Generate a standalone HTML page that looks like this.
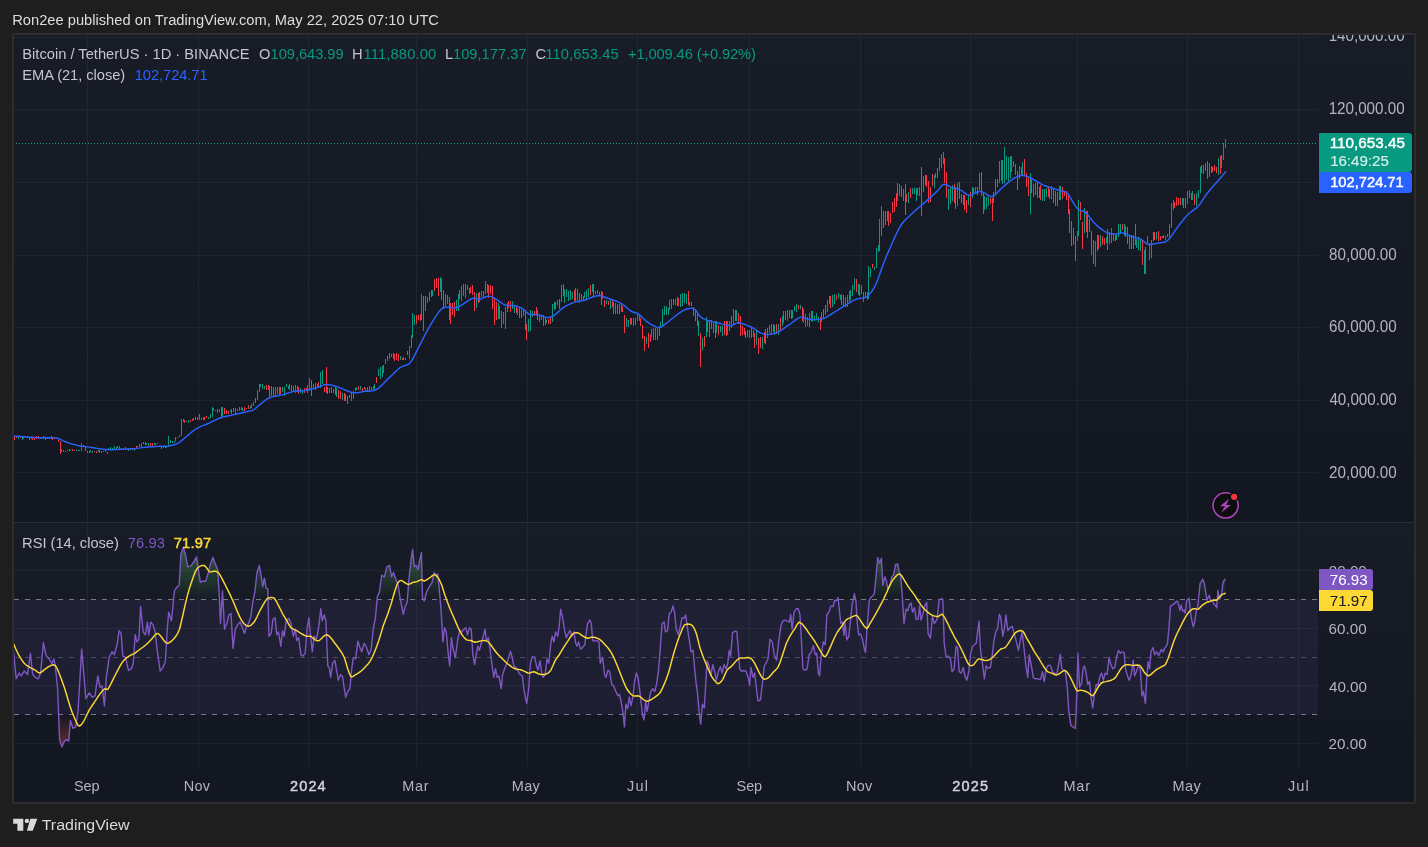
<!DOCTYPE html>
<html lang="en"><head><meta charset="utf-8"><title>BTCUSDT chart</title>
<style>
html,body{margin:0;padding:0;background:#1e1e1e;}
body{width:1428px;height:847px;position:relative;overflow:hidden;font-family:"Liberation Sans","DejaVu Sans",sans-serif;}
#chart{position:absolute;left:12px;top:33px;width:1400px;height:767px;border:2px solid #2d2d2d;border-radius:2px;background:#131722;}
.pane{position:absolute;left:0;width:1400px;background:linear-gradient(#181c27,#131722);}
.t{position:absolute;white-space:nowrap;line-height:1;color:#b2b5be;}
.hd{color:#dcdcdc;}
.lg{color:#c3c6ce;}
.gr{color:#089981;}
.ax{color:#b2b5be;}
.tm{color:#b2b5be;}
.yr{color:#d1d4dc;}
#txt{position:absolute;left:0;top:0;width:1428px;height:847px;will-change:transform;}
.pl{position:absolute;left:1319px;}
.pl .t{color:#fff;}
</style></head><body>
<div id="chart"><div class="pane" style="top:0;height:487px"></div><div class="pane" style="top:488px;height:244px"></div></div>
<svg width="1428" height="847" viewBox="0 0 1428 847" style="position:absolute;left:0;top:0">
<defs>
<linearGradient id="gob" gradientUnits="userSpaceOnUse" x1="0" y1="513" x2="0" y2="599.5"><stop offset="0" stop-color="#4caf50" stop-opacity="0.75"/><stop offset="1" stop-color="#4caf50" stop-opacity="0"/></linearGradient>
<linearGradient id="gos" gradientUnits="userSpaceOnUse" x1="0" y1="714.5" x2="0" y2="800"><stop offset="0" stop-color="#ff5252" stop-opacity="0"/><stop offset="1" stop-color="#ff5252" stop-opacity="0.9"/></linearGradient>
<clipPath id="cob"><rect x="14" y="523" width="1304" height="76.5"/></clipPath>
<clipPath id="cos"><rect x="14" y="714.5" width="1304" height="52.5"/></clipPath>
<clipPath id="cmain"><rect x="14" y="35" width="1304" height="487"/></clipPath>
<clipPath id="crsi"><rect x="14" y="523" width="1304" height="244"/></clipPath>
</defs>
<path fill="#f0f3fa" fill-opacity="0.055" shape-rendering="crispEdges" d="M87 35h1v732h-1zM198 35h1v732h-1zM308 35h1v732h-1zM416 35h1v732h-1zM527 35h1v732h-1zM637 35h1v732h-1zM749 35h1v732h-1zM860 35h1v732h-1zM970 35h1v732h-1zM1077 35h1v732h-1zM1187 35h1v732h-1zM1298 35h1v732h-1zM14 37h1304v1h-1304zM14 109h1304v1h-1304zM14 182h1304v1h-1304zM14 255h1304v1h-1304zM14 327h1304v1h-1304zM14 400h1304v1h-1304zM14 472h1304v1h-1304zM14 570h1304v1h-1304zM14 628h1304v1h-1304zM14 685h1304v1h-1304zM14 743h1304v1h-1304z"/>
<rect x="14" y="522" width="1400" height="1" fill="#2a2e39" shape-rendering="crispEdges"/>
<rect x="14" y="599.5" width="1304" height="115" fill="#7e57c2" fill-opacity="0.1"/>
<path d="M14 599.5H1318M14 714.5H1318" stroke="#787b86" stroke-width="1" stroke-dasharray="5 6" fill="none" shape-rendering="crispEdges"/>
<path d="M14 657.5H1318" stroke="#787b86" stroke-opacity="0.5" stroke-width="1" stroke-dasharray="5 6" fill="none" shape-rendering="crispEdges"/>
<path d="M16 143.5H1318" stroke="#0aa58a" stroke-width="1" stroke-dasharray="1 2" fill="none" shape-rendering="crispEdges"/>
<g shape-rendering="crispEdges" clip-path="url(#cmain)"><path fill="#089981" d="M18 436h1v3h-1zM22 436h1v4h-1zM23 437h1v2h-1zM25 437h1v1h-1zM27 436h1v2h-1zM40 437h1v2h-1zM45 437h1v3h-1zM47 437h1v2h-1zM49 437h1v2h-1zM51 436h1v3h-1zM61 449h1v3h-1zM63 450h1v2h-1zM70 450h1v1h-1zM76 450h1v1h-1zM78 450h1v1h-1zM79 450h1v1h-1zM81 443h1v8h-1zM83 445h1v2h-1zM90 450h1v2h-1zM92 451h1v2h-1zM98 450h1v2h-1zM99 450h1v3h-1zM103 451h1v1h-1zM108 448h1v1h-1zM110 447h1v2h-1zM112 448h1v1h-1zM114 446h1v3h-1zM116 447h1v2h-1zM119 446h1v4h-1zM123 448h1v1h-1zM128 449h1v2h-1zM134 448h1v3h-1zM139 444h1v3h-1zM141 443h1v4h-1zM145 442h1v3h-1zM146 443h1v2h-1zM148 443h1v3h-1zM154 443h1v2h-1zM155 443h1v2h-1zM157 443h1v1h-1zM166 446h1v2h-1zM168 436h1v11h-1zM170 440h1v3h-1zM172 441h1v2h-1zM174 441h1v2h-1zM175 437h1v4h-1zM177 437h1v1h-1zM179 435h1v2h-1zM181 419h1v17h-1zM183 419h1v3h-1zM186 421h1v1h-1zM188 420h1v3h-1zM195 417h1v3h-1zM197 417h1v3h-1zM201 418h1v2h-1zM203 417h1v3h-1zM208 417h1v2h-1zM210 414h1v4h-1zM212 407h1v10h-1zM213 408h1v3h-1zM215 410h1v1h-1zM217 409h1v4h-1zM219 409h1v3h-1zM222 407h1v9h-1zM230 410h1v2h-1zM231 409h1v5h-1zM233 408h1v4h-1zM235 408h1v6h-1zM237 409h1v2h-1zM239 407h1v4h-1zM241 407h1v3h-1zM242 408h1v3h-1zM250 406h1v3h-1zM251 404h1v4h-1zM253 402h1v4h-1zM257 390h1v10h-1zM259 384h1v8h-1zM260 384h1v3h-1zM262 384h1v5h-1zM264 386h1v3h-1zM273 387h1v10h-1zM275 387h1v9h-1zM279 387h1v8h-1zM282 387h1v5h-1zM284 387h1v9h-1zM286 384h1v3h-1zM288 386h1v3h-1zM291 385h1v7h-1zM293 386h1v6h-1zM295 385h1v8h-1zM300 388h1v5h-1zM302 390h1v4h-1zM307 385h1v8h-1zM309 378h1v12h-1zM313 384h1v4h-1zM317 384h1v4h-1zM320 372h1v16h-1zM322 370h1v14h-1zM331 387h1v6h-1zM336 388h1v9h-1zM342 393h1v7h-1zM351 392h1v9h-1zM353 391h1v8h-1zM355 388h1v3h-1zM356 387h1v3h-1zM360 386h1v4h-1zM367 387h1v5h-1zM369 386h1v6h-1zM374 384h1v7h-1zM378 369h1v7h-1zM380 367h1v12h-1zM382 366h1v11h-1zM383 365h1v8h-1zM385 359h1v5h-1zM389 353h1v6h-1zM391 354h1v3h-1zM400 356h1v4h-1zM405 358h1v2h-1zM409 346h1v13h-1zM411 335h1v13h-1zM412 313h1v25h-1zM414 315h1v10h-1zM421 294h1v26h-1zM427 297h1v6h-1zM432 290h1v6h-1zM440 277h1v15h-1zM456 300h1v11h-1zM458 294h1v17h-1zM461 286h1v15h-1zM463 284h1v12h-1zM465 284h1v14h-1zM469 288h1v6h-1zM476 293h1v15h-1zM481 291h1v6h-1zM483 291h1v6h-1zM485 281h1v13h-1zM498 303h1v16h-1zM503 312h1v12h-1zM505 307h1v22h-1zM512 301h1v8h-1zM514 305h1v8h-1zM517 308h1v7h-1zM523 309h1v7h-1zM528 319h1v13h-1zM530 310h1v21h-1zM532 311h1v6h-1zM543 315h1v11h-1zM546 320h1v3h-1zM552 304h1v18h-1zM554 302h1v8h-1zM557 300h1v5h-1zM561 285h1v17h-1zM564 289h1v14h-1zM566 289h1v8h-1zM568 291h1v10h-1zM570 290h1v10h-1zM572 292h1v7h-1zM575 288h1v13h-1zM577 289h1v12h-1zM584 292h1v6h-1zM586 290h1v9h-1zM588 288h1v9h-1zM592 284h1v8h-1zM595 291h1v3h-1zM597 290h1v4h-1zM606 300h1v4h-1zM610 300h1v9h-1zM615 303h1v11h-1zM626 318h1v9h-1zM628 320h1v7h-1zM631 318h1v7h-1zM633 318h1v8h-1zM637 313h1v8h-1zM639 314h1v7h-1zM646 337h1v7h-1zM651 329h1v8h-1zM653 328h1v12h-1zM655 328h1v12h-1zM657 328h1v12h-1zM660 322h1v6h-1zM662 309h1v18h-1zM664 306h1v9h-1zM666 306h1v9h-1zM668 308h1v7h-1zM669 300h1v10h-1zM671 299h1v10h-1zM675 299h1v6h-1zM677 297h1v9h-1zM680 294h1v13h-1zM682 293h1v13h-1zM684 293h1v10h-1zM686 294h1v10h-1zM689 302h1v4h-1zM697 314h1v12h-1zM698 321h1v15h-1zM702 338h1v12h-1zM706 317h1v20h-1zM711 320h1v9h-1zM713 323h1v10h-1zM716 321h1v12h-1zM720 326h1v6h-1zM722 326h1v10h-1zM727 321h1v14h-1zM733 309h1v15h-1zM736 310h1v11h-1zM749 330h1v8h-1zM753 330h1v7h-1zM756 331h1v14h-1zM762 337h1v12h-1zM767 328h1v10h-1zM769 325h1v8h-1zM771 324h1v11h-1zM774 325h1v10h-1zM778 324h1v11h-1zM782 316h1v10h-1zM783 311h1v12h-1zM785 311h1v9h-1zM787 310h1v11h-1zM792 310h1v8h-1zM794 306h1v5h-1zM796 304h1v8h-1zM800 305h1v4h-1zM803 309h1v14h-1zM805 314h1v13h-1zM807 317h1v9h-1zM809 313h1v14h-1zM812 311h1v11h-1zM814 316h1v5h-1zM816 313h1v7h-1zM818 317h1v6h-1zM821 312h1v10h-1zM827 300h1v12h-1zM832 295h1v12h-1zM834 294h1v10h-1zM838 293h1v5h-1zM840 295h1v5h-1zM841 294h1v11h-1zM845 297h1v10h-1zM847 295h1v12h-1zM849 291h1v12h-1zM850 290h1v10h-1zM852 285h1v11h-1zM854 278h1v12h-1zM858 284h1v11h-1zM859 284h1v12h-1zM863 292h1v10h-1zM865 292h1v6h-1zM867 292h1v8h-1zM868 266h1v33h-1zM870 268h1v9h-1zM874 267h1v3h-1zM876 248h1v20h-1zM878 245h1v7h-1zM879 219h1v32h-1zM881 206h1v30h-1zM897 183h1v18h-1zM899 184h1v12h-1zM908 192h1v11h-1zM912 188h1v6h-1zM914 188h1v6h-1zM916 188h1v13h-1zM917 188h1v7h-1zM919 187h1v9h-1zM923 176h1v16h-1zM934 175h1v13h-1zM935 173h1v5h-1zM939 158h1v13h-1zM941 154h1v14h-1zM943 152h1v12h-1zM948 189h1v21h-1zM950 187h1v17h-1zM952 185h1v16h-1zM957 183h1v23h-1zM968 195h1v10h-1zM972 187h1v11h-1zM975 187h1v6h-1zM979 173h1v17h-1zM984 196h1v14h-1zM986 197h1v12h-1zM988 197h1v9h-1zM993 192h1v11h-1zM995 179h1v15h-1zM997 179h1v8h-1zM999 161h1v22h-1zM1001 160h1v21h-1zM1002 160h1v24h-1zM1004 147h1v36h-1zM1006 156h1v24h-1zM1008 157h1v24h-1zM1010 156h1v22h-1zM1011 156h1v16h-1zM1013 161h1v6h-1zM1015 164h1v11h-1zM1021 167h1v9h-1zM1022 162h1v14h-1zM1030 173h1v41h-1zM1042 189h1v12h-1zM1044 189h1v12h-1zM1046 188h1v9h-1zM1049 189h1v10h-1zM1051 186h1v13h-1zM1057 192h1v14h-1zM1059 186h1v14h-1zM1060 186h1v14h-1zM1073 228h1v17h-1zM1077 231h1v10h-1zM1078 200h1v36h-1zM1084 208h1v25h-1zM1095 241h1v26h-1zM1100 235h1v12h-1zM1106 237h1v6h-1zM1109 232h1v12h-1zM1111 228h1v15h-1zM1113 233h1v8h-1zM1116 235h1v5h-1zM1118 224h1v13h-1zM1120 224h1v9h-1zM1124 224h1v12h-1zM1136 239h1v9h-1zM1138 237h1v13h-1zM1140 240h1v11h-1zM1144 250h1v24h-1zM1147 236h1v7h-1zM1149 243h1v17h-1zM1151 240h1v18h-1zM1156 232h1v7h-1zM1165 236h1v4h-1zM1169 224h1v15h-1zM1171 203h1v25h-1zM1173 200h1v10h-1zM1182 198h1v7h-1zM1183 198h1v10h-1zM1187 191h1v13h-1zM1189 190h1v8h-1zM1192 191h1v9h-1zM1196 193h1v13h-1zM1198 190h1v8h-1zM1200 167h1v26h-1zM1203 165h1v9h-1zM1205 163h1v8h-1zM1209 163h1v14h-1zM1211 166h1v7h-1zM1218 158h1v17h-1zM1221 155h1v13h-1zM1223 143h1v17h-1zM1225 139h1v9h-1z"/><path fill="#f23645" d="M14 436h1v4h-1zM16 437h1v1h-1zM20 436h1v2h-1zM29 437h1v3h-1zM31 437h1v2h-1zM32 437h1v3h-1zM34 437h1v3h-1zM36 436h1v3h-1zM38 436h1v3h-1zM41 437h1v1h-1zM43 436h1v3h-1zM52 438h1v2h-1zM54 437h1v2h-1zM56 438h1v1h-1zM58 440h1v2h-1zM60 441h1v13h-1zM65 451h1v1h-1zM67 450h1v1h-1zM69 449h1v2h-1zM72 449h1v2h-1zM74 450h1v1h-1zM85 446h1v5h-1zM87 451h1v2h-1zM89 451h1v2h-1zM94 451h1v1h-1zM96 451h1v2h-1zM101 451h1v2h-1zM105 450h1v2h-1zM107 452h1v2h-1zM117 446h1v2h-1zM121 448h1v1h-1zM125 447h1v2h-1zM127 448h1v1h-1zM130 448h1v2h-1zM132 448h1v2h-1zM136 446h1v2h-1zM137 446h1v1h-1zM143 442h1v2h-1zM150 443h1v3h-1zM152 443h1v3h-1zM159 446h1v1h-1zM161 447h1v2h-1zM163 447h1v1h-1zM165 447h1v1h-1zM184 420h1v3h-1zM190 420h1v2h-1zM192 419h1v2h-1zM193 418h1v2h-1zM199 414h1v6h-1zM204 417h1v3h-1zM206 416h1v2h-1zM221 407h1v11h-1zM224 408h1v6h-1zM226 410h1v4h-1zM228 411h1v3h-1zM244 407h1v4h-1zM246 408h1v1h-1zM248 405h1v4h-1zM255 398h1v5h-1zM266 385h1v5h-1zM268 385h1v5h-1zM269 386h1v12h-1zM271 386h1v10h-1zM277 387h1v7h-1zM280 387h1v7h-1zM289 384h1v6h-1zM297 386h1v5h-1zM298 387h1v7h-1zM304 388h1v5h-1zM306 388h1v3h-1zM311 380h1v16h-1zM315 383h1v7h-1zM318 382h1v6h-1zM324 387h1v5h-1zM326 367h1v26h-1zM327 387h1v7h-1zM329 388h1v5h-1zM333 389h1v4h-1zM335 387h1v8h-1zM338 390h1v9h-1zM340 391h1v8h-1zM344 393h1v8h-1zM345 394h1v7h-1zM347 396h1v8h-1zM349 395h1v3h-1zM358 386h1v4h-1zM362 388h1v4h-1zM364 387h1v2h-1zM365 388h1v3h-1zM371 387h1v3h-1zM373 386h1v3h-1zM376 377h1v6h-1zM387 356h1v5h-1zM393 353h1v6h-1zM394 354h1v7h-1zM396 353h1v7h-1zM398 354h1v7h-1zM402 358h1v2h-1zM403 357h1v3h-1zM407 351h1v4h-1zM416 315h1v9h-1zM418 315h1v5h-1zM420 314h1v7h-1zM423 296h1v35h-1zM425 296h1v15h-1zM429 292h1v9h-1zM431 290h1v7h-1zM434 279h1v12h-1zM436 278h1v10h-1zM438 278h1v18h-1zM441 279h1v21h-1zM443 290h1v19h-1zM445 294h1v12h-1zM447 295h1v9h-1zM449 297h1v23h-1zM450 303h1v21h-1zM452 303h1v12h-1zM454 302h1v15h-1zM459 290h1v9h-1zM467 285h1v5h-1zM470 287h1v6h-1zM472 285h1v10h-1zM474 292h1v19h-1zM478 293h1v10h-1zM479 292h1v10h-1zM487 284h1v9h-1zM488 285h1v13h-1zM490 285h1v9h-1zM492 286h1v23h-1zM494 299h1v26h-1zM496 302h1v18h-1zM499 306h1v13h-1zM501 311h1v17h-1zM507 303h1v9h-1zM508 301h1v7h-1zM510 301h1v11h-1zM516 307h1v6h-1zM519 308h1v10h-1zM521 310h1v8h-1zM525 310h1v20h-1zM526 324h1v16h-1zM534 311h1v5h-1zM536 307h1v9h-1zM537 310h1v10h-1zM539 314h1v8h-1zM541 315h1v5h-1zM545 317h1v8h-1zM548 319h1v5h-1zM550 316h1v8h-1zM555 302h1v7h-1zM559 299h1v10h-1zM563 284h1v12h-1zM574 290h1v11h-1zM579 293h1v10h-1zM581 294h1v6h-1zM583 296h1v5h-1zM590 285h1v10h-1zM593 284h1v12h-1zM599 292h1v3h-1zM601 291h1v14h-1zM602 292h1v7h-1zM604 300h1v7h-1zM608 301h1v4h-1zM612 300h1v7h-1zM613 302h1v12h-1zM617 304h1v10h-1zM619 304h1v10h-1zM621 304h1v8h-1zM622 306h1v6h-1zM624 315h1v18h-1zM630 318h1v6h-1zM635 318h1v7h-1zM640 318h1v8h-1zM642 325h1v14h-1zM644 336h1v15h-1zM648 333h1v15h-1zM650 335h1v7h-1zM659 326h1v10h-1zM673 299h1v6h-1zM678 298h1v8h-1zM688 291h1v14h-1zM691 302h1v4h-1zM693 307h1v9h-1zM695 309h1v12h-1zM700 333h1v34h-1zM704 336h1v11h-1zM707 320h1v12h-1zM709 320h1v17h-1zM715 321h1v17h-1zM718 325h1v10h-1zM724 321h1v14h-1zM726 321h1v15h-1zM729 321h1v10h-1zM731 316h1v12h-1zM735 310h1v11h-1zM738 313h1v11h-1zM740 316h1v20h-1zM742 326h1v9h-1zM744 328h1v7h-1zM745 331h1v7h-1zM747 330h1v7h-1zM751 327h1v11h-1zM754 333h1v15h-1zM758 338h1v16h-1zM760 337h1v11h-1zM764 332h1v11h-1zM765 329h1v15h-1zM773 324h1v8h-1zM776 324h1v10h-1zM780 318h1v13h-1zM789 310h1v8h-1zM791 310h1v9h-1zM798 305h1v4h-1zM802 307h1v14h-1zM811 311h1v10h-1zM820 317h1v13h-1zM823 309h1v10h-1zM825 305h1v10h-1zM829 296h1v8h-1zM830 296h1v12h-1zM836 295h1v5h-1zM843 295h1v11h-1zM856 279h1v13h-1zM861 285h1v9h-1zM872 264h1v4h-1zM883 211h1v17h-1zM885 211h1v14h-1zM887 211h1v10h-1zM888 211h1v15h-1zM890 213h1v10h-1zM892 202h1v11h-1zM894 198h1v14h-1zM896 193h1v14h-1zM901 186h1v11h-1zM903 189h1v12h-1zM905 184h1v31h-1zM906 194h1v8h-1zM910 188h1v10h-1zM921 167h1v49h-1zM925 175h1v10h-1zM926 175h1v12h-1zM928 181h1v22h-1zM930 187h1v15h-1zM932 174h1v12h-1zM937 168h1v10h-1zM944 158h1v25h-1zM946 172h1v26h-1zM954 184h1v19h-1zM955 187h1v22h-1zM959 182h1v17h-1zM961 194h1v9h-1zM963 195h1v10h-1zM964 195h1v15h-1zM966 200h1v13h-1zM970 192h1v15h-1zM973 188h1v6h-1zM977 187h1v8h-1zM981 172h1v24h-1zM983 192h1v22h-1zM990 198h1v6h-1zM992 198h1v23h-1zM1017 171h1v19h-1zM1019 166h1v13h-1zM1024 159h1v16h-1zM1026 173h1v14h-1zM1028 177h1v19h-1zM1031 179h1v14h-1zM1033 184h1v13h-1zM1035 183h1v12h-1zM1037 181h1v17h-1zM1039 187h1v11h-1zM1040 185h1v15h-1zM1048 186h1v11h-1zM1053 189h1v14h-1zM1055 191h1v15h-1zM1062 187h1v12h-1zM1064 191h1v5h-1zM1066 191h1v9h-1zM1068 195h1v19h-1zM1069 209h1v24h-1zM1071 221h1v25h-1zM1075 236h1v25h-1zM1080 202h1v18h-1zM1082 222h1v27h-1zM1086 211h1v21h-1zM1087 211h1v27h-1zM1089 219h1v13h-1zM1091 231h1v24h-1zM1093 240h1v24h-1zM1097 235h1v16h-1zM1098 235h1v14h-1zM1102 236h1v9h-1zM1104 238h1v7h-1zM1107 229h1v21h-1zM1115 235h1v6h-1zM1122 224h1v6h-1zM1125 226h1v11h-1zM1127 227h1v17h-1zM1129 236h1v13h-1zM1131 235h1v14h-1zM1133 235h1v14h-1zM1135 224h1v21h-1zM1142 241h1v24h-1zM1145 247h1v27h-1zM1153 232h1v9h-1zM1154 232h1v8h-1zM1158 231h1v10h-1zM1160 236h1v4h-1zM1162 236h1v2h-1zM1163 235h1v3h-1zM1167 234h1v3h-1zM1174 202h1v6h-1zM1176 197h1v9h-1zM1178 198h1v7h-1zM1180 198h1v7h-1zM1185 198h1v10h-1zM1191 193h1v7h-1zM1194 194h1v11h-1zM1201 165h1v8h-1zM1207 161h1v18h-1zM1212 167h1v5h-1zM1214 165h1v6h-1zM1216 167h1v6h-1zM1220 156h1v18h-1z"/></g>
<path d="M13.7 436.0L15.0 436.1L16.6 436.2L18.6 436.3L20.9 436.5L23.2 436.7L25.6 436.9L27.9 437.0L30.0 437.2L31.8 437.3L34.6 437.5L36.9 437.6L39.1 437.7L41.3 437.7L43.6 437.8L45.8 437.8L48.2 437.8L50.5 437.8L52.9 437.8L55.1 437.9L57.1 438.2L59.4 438.8L61.4 439.8L63.2 440.9L65.5 441.8L67.6 442.6L70.0 443.4L72.5 444.1L74.9 444.8L77.2 445.4L79.2 445.8L80.9 446.1L82.6 446.3L84.7 446.5L87.3 446.9L88.9 447.1L90.8 447.4L92.8 447.7L95.0 448.0L97.2 448.4L99.4 448.7L101.6 449.0L103.7 449.2L105.7 449.4L107.5 449.6L110.1 449.7L112.5 449.7L114.6 449.6L116.7 449.5L118.8 449.4L120.9 449.2L123.2 449.2L125.5 449.1L127.9 449.0L130.1 448.8L132.3 448.7L134.4 448.6L136.5 448.4L138.5 448.1L140.3 447.9L142.3 447.6L144.5 447.4L146.5 447.2L148.8 447.0L151.2 446.8L153.5 446.7L155.8 446.5L157.9 446.4L160.1 446.3L162.2 446.3L164.1 446.3L166.0 446.3L168.0 446.1L170.0 445.7L172.1 445.3L174.2 444.7L176.2 444.1L178.1 443.2L180.2 441.8L182.3 440.1L184.3 438.3L186.5 436.5L188.4 434.9L190.3 433.3L192.3 431.6L194.4 430.0L196.6 428.6L198.8 427.4L201.1 426.4L203.5 425.4L205.9 424.5L208.3 423.5L210.6 422.4L212.9 421.2L215.3 420.1L217.6 419.0L220.1 418.0L222.2 417.3L224.3 416.7L226.5 416.2L228.8 415.7L231.1 415.2L233.5 414.6L235.5 414.2L237.7 413.7L240.0 413.2L242.4 412.7L244.6 412.2L246.7 411.7L248.5 411.3L250.0 410.9L252.2 410.7L254.0 409.5L255.5 408.4L257.3 406.8L259.4 405.1L261.6 403.2L263.8 401.4L266.0 399.7L268.1 398.5L270.1 397.6L272.2 396.9L274.2 396.4L276.3 396.0L278.3 395.7L280.2 395.3L282.1 394.9L284.2 394.3L286.2 393.6L288.2 393.0L290.1 392.4L292.1 391.9L294.2 391.4L296.1 391.2L298.1 391.0L300.2 390.8L302.2 390.7L304.3 390.5L306.3 390.3L308.2 390.0L310.4 389.5L312.6 388.9L314.8 388.3L316.8 387.6L318.6 387.0L320.3 386.4L322.6 385.5L324.2 384.7L326.3 384.4L327.9 384.5L329.7 384.7L331.7 385.1L333.9 385.7L336.3 386.4L338.1 387.0L340.0 387.8L342.1 388.7L344.2 389.6L346.4 390.5L348.5 391.3L350.5 392.0L352.4 392.5L354.6 392.7L356.7 392.7L358.7 392.5L360.6 392.1L362.5 391.8L364.4 391.4L366.4 391.3L368.4 391.2L370.4 391.1L372.5 390.8L374.5 390.3L376.5 389.4L378.5 388.1L380.5 386.4L382.5 384.5L384.5 382.4L386.5 380.3L388.5 378.4L390.5 376.5L392.6 374.5L394.7 372.4L396.8 370.5L398.7 368.8L400.5 367.4L403.1 366.1L405.4 365.4L407.5 364.8L409.6 363.4L411.9 360.3L414.0 356.4L416.6 351.3L418.3 348.0L420.2 344.3L422.3 340.2L424.4 336.0L426.6 331.9L428.6 328.2L430.7 324.7L432.8 321.1L434.9 317.7L437.0 314.6L438.9 311.9L440.7 309.8L443.0 307.9L444.9 307.3L446.8 307.2L448.7 307.2L450.5 307.3L452.2 307.9L454.2 308.3L456.7 307.8L458.4 307.0L460.4 305.8L462.6 304.4L464.9 302.9L467.2 301.4L469.3 300.0L471.2 298.9L472.8 298.1L476.0 298.4L478.4 299.5L480.2 299.0L482.3 298.2L484.5 297.3L486.6 296.5L488.5 296.1L490.9 296.4L492.8 297.3L495.2 298.7L497.0 299.8L499.0 301.2L501.1 302.7L503.2 304.1L505.3 305.0L507.3 305.5L509.4 305.6L511.5 305.5L513.5 305.5L515.4 305.7L517.7 306.4L519.9 307.4L522.0 308.5L523.8 309.6L526.3 312.1L528.8 314.1L530.6 314.5L532.7 314.5L534.9 314.4L537.2 314.6L539.2 315.1L541.3 315.8L543.4 316.6L545.5 317.2L547.3 317.5L549.7 317.4L551.7 316.8L554.0 315.5L555.8 314.1L557.8 312.4L559.9 310.5L562.0 308.6L564.1 307.1L566.1 305.8L568.2 304.8L570.2 303.9L572.2 303.1L574.2 302.4L576.2 301.8L578.3 301.4L580.4 301.1L582.4 300.8L584.3 300.3L586.5 299.5L588.7 298.6L590.7 297.7L592.7 297.0L595.0 296.2L597.1 295.7L599.4 295.6L601.4 296.0L603.5 296.7L605.7 297.5L607.8 298.3L610.0 299.0L612.1 299.7L614.2 300.4L616.2 301.2L618.5 302.1L620.6 303.1L622.9 304.5L625.0 306.1L627.1 308.0L629.3 309.8L631.3 311.3L633.6 312.2L635.8 312.7L638.1 313.8L640.0 315.4L642.2 317.4L644.3 319.5L646.5 321.3L648.7 322.9L650.9 324.3L653.0 325.5L654.9 326.4L657.5 327.6L659.9 327.6L662.0 326.6L664.2 324.9L666.6 323.0L668.6 321.5L670.7 319.7L672.9 318.0L675.0 316.3L677.2 314.7L679.3 313.1L681.5 311.6L683.4 310.4L685.9 309.3L688.1 308.7L690.2 308.4L692.7 308.3L695.2 309.6L697.0 312.0L699.0 315.2L701.9 318.0L703.7 318.9L705.7 319.7L707.9 320.4L710.2 321.0L712.5 321.7L714.8 322.2L717.0 322.8L719.1 323.3L721.3 323.9L723.5 324.4L725.6 324.9L727.7 325.3L729.5 325.5L731.2 325.6L733.8 324.8L735.7 323.4L738.3 322.8L740.1 323.0L742.1 323.6L744.3 324.3L746.5 325.1L748.8 326.1L751.0 327.0L753.1 328.1L755.3 329.5L757.4 330.9L759.5 332.3L761.6 333.4L763.8 334.1L765.9 334.4L768.1 334.5L770.2 334.3L772.4 333.9L774.5 333.4L776.5 332.7L778.8 331.7L781.1 330.3L783.3 328.8L785.5 327.2L787.8 325.6L790.0 324.1L792.2 322.5L794.5 320.8L796.7 319.2L798.8 317.9L800.6 317.1L803.1 317.1L805.0 318.2L807.7 319.1L809.4 319.2L811.3 319.4L813.4 319.6L815.6 319.6L817.8 319.6L819.9 319.4L821.8 319.1L824.3 318.3L826.6 317.1L828.8 315.7L831.0 314.3L833.2 312.9L835.4 311.5L837.7 310.1L840.0 308.6L842.2 307.2L844.5 305.8L846.8 304.4L849.1 302.9L851.3 301.6L853.6 300.3L855.9 299.3L858.2 298.6L860.5 298.3L862.9 298.0L865.1 297.5L867.2 296.4L869.5 294.3L871.6 291.7L873.6 288.5L875.7 284.5L877.8 279.5L879.9 273.7L882.1 267.6L884.2 261.8L886.3 256.6L888.4 251.6L890.6 246.7L892.7 242.0L894.7 237.4L896.8 233.0L898.9 228.8L901.2 225.0L903.2 222.3L905.3 219.9L907.6 217.7L910.0 215.5L912.5 213.1L914.5 211.3L916.7 209.3L919.0 207.3L921.3 205.3L923.6 203.4L925.7 201.6L927.6 199.9L930.4 197.4L932.8 195.3L935.0 193.3L937.0 191.4L939.4 188.6L941.4 185.9L943.6 184.4L945.6 184.5L947.8 185.5L950.0 186.7L952.1 187.6L954.6 188.2L957.1 188.7L959.7 189.5L961.9 190.9L964.2 192.7L966.6 194.4L969.1 195.2L971.3 194.9L973.5 193.9L975.8 192.7L978.2 191.8L980.5 191.4L982.8 192.1L985.1 193.4L987.4 195.0L989.7 196.2L991.8 196.5L994.3 195.5L996.5 193.5L998.8 191.0L1001.3 188.6L1003.4 186.7L1005.7 184.6L1008.0 182.6L1010.4 180.7L1012.6 179.1L1014.7 177.9L1016.8 176.8L1018.9 176.0L1020.9 175.5L1023.0 175.4L1025.1 175.7L1027.2 176.4L1029.3 177.4L1031.4 178.5L1033.4 179.5L1035.8 180.8L1038.2 182.2L1040.5 183.6L1042.8 184.8L1045.2 185.8L1047.7 186.7L1050.0 187.5L1052.3 188.2L1054.9 189.0L1057.4 189.7L1059.8 190.5L1062.3 190.9L1064.7 191.5L1067.4 193.3L1069.6 196.3L1072.0 200.4L1074.4 204.6L1076.8 207.9L1079.2 209.7L1081.7 210.8L1084.1 211.7L1086.3 213.1L1088.9 216.1L1091.4 219.5L1093.8 222.6L1096.4 225.1L1098.9 227.3L1101.4 229.2L1103.9 231.0L1106.4 232.5L1109.0 233.6L1111.5 234.0L1114.0 234.0L1116.5 233.9L1119.0 233.5L1121.6 233.0L1124.1 233.0L1126.6 234.0L1129.1 235.5L1131.6 236.8L1133.7 237.3L1135.9 237.6L1138.1 238.0L1140.1 238.7L1142.8 240.5L1145.3 242.8L1147.7 244.3L1150.0 244.6L1152.2 244.2L1154.3 243.8L1157.1 243.4L1160.0 242.8L1161.8 242.5L1163.8 242.2L1165.9 241.5L1168.1 240.0L1170.0 237.9L1172.0 235.3L1174.1 232.2L1176.1 229.2L1178.2 226.4L1180.2 223.8L1182.2 221.2L1184.2 218.8L1186.2 216.4L1188.2 214.3L1190.3 212.5L1192.4 210.9L1194.5 209.4L1196.5 207.9L1198.2 206.3L1200.5 203.4L1202.2 200.4L1204.3 197.3L1206.1 194.8L1208.1 192.2L1210.2 189.7L1212.3 187.2L1214.3 184.8L1216.5 182.5L1218.5 180.2L1220.3 178.2L1223.5 174.4L1225.7 171.8" fill="none" stroke="#2962ff" stroke-width="1.45" stroke-linejoin="round" stroke-linecap="round" clip-path="url(#cmain)"/>
<path d="M13.4 650.4L16.2 678.8L19.1 673.1L21.3 675.9L24.2 671.1L27.6 674.5L30.4 653.3L32.7 674.5L35.5 677.4L38.3 678.8L40.6 673.1L43.4 642.8L46.3 656.1L49.1 658.9L51.9 663.7L53.9 658.9L55.3 666.0L57.6 688.7L59.6 739.7L61.9 746.8L64.4 741.1L66.7 739.7L68.7 741.1L70.4 720.4L72.9 728.4L75.7 726.9L78.0 711.4L81.7 649.0L83.1 666.0L85.9 698.6L89.3 692.9L92.2 697.2L95.0 695.8L97.8 675.9L100.1 687.3L102.1 685.9L104.4 705.7L106.3 677.4L109.2 657.5L112.0 651.8L114.3 654.7L117.1 644.8L119.1 630.6L121.1 633.4L122.8 656.1L125.6 657.5L128.4 670.3L131.3 668.8L133.3 663.2L135.2 634.8L136.9 641.9L138.9 639.1L140.6 606.5L143.2 632.0L145.4 634.8L147.4 622.1L148.8 634.8L150.8 622.1L153.1 624.9L155.1 632.0L157.4 651.8L160.2 671.1L163.0 667.4L165.3 661.8L167.3 629.2L168.7 612.2L171.5 620.7L174.4 590.9L177.2 586.7L179.2 585.3L180.9 554.1L183.4 547.6L185.7 555.5L187.7 566.8L191.4 565.4L194.2 561.2L196.5 556.9L198.4 569.7L200.4 582.4L202.7 581.0L205.5 581.6L208.4 572.5L210.6 563.4L212.9 557.5L215.4 564.0L217.7 569.7L219.1 592.3L220.5 623.5L222.5 590.9L224.5 629.2L226.8 623.5L228.8 615.0L231.0 613.6L233.0 648.4L235.3 629.2L237.5 624.9L240.1 622.1L242.4 627.8L244.6 633.4L246.6 626.3L248.5 623.5L250.8 616.4L252.8 602.3L255.0 590.9L257.0 572.5L259.3 565.4L261.3 576.8L262.7 586.7L264.4 578.2L266.1 588.1L267.8 588.9L268.9 636.3L271.2 633.4L272.9 619.3L275.1 617.8L276.8 634.8L278.5 632.0L280.8 646.2L282.5 630.6L284.2 636.3L286.2 620.7L288.7 618.4L291.0 623.5L293.3 636.3L295.3 629.2L296.7 640.5L298.7 637.7L300.9 654.7L302.9 656.1L305.2 653.3L307.2 627.8L308.9 617.8L310.8 639.1L312.3 651.8L314.2 636.3L316.5 639.1L318.8 626.3L320.8 608.8L322.2 620.7L324.2 615.0L325.9 620.7L327.8 666.0L329.3 667.4L330.7 677.4L332.7 663.2L334.9 660.3L336.3 668.8L338.3 680.2L340.6 674.5L342.6 676.8L344.3 688.7L345.7 697.2L347.7 691.5L349.9 688.7L351.4 671.7L353.3 657.5L355.6 658.9L357.9 641.1L359.9 647.6L361.8 651.8L364.1 643.3L366.1 646.2L368.9 654.7L371.2 649.0L373.2 629.2L375.4 617.8L377.4 596.6L379.4 592.3L381.7 575.3L384.5 576.8L386.8 566.8L389.6 565.4L391.6 576.8L393.6 572.5L395.9 579.6L398.1 585.3L400.1 598.0L401.5 605.1L403.2 614.4L405.2 606.5L407.2 602.3L408.9 579.6L410.9 561.2L412.6 549.3L414.3 566.8L416.3 565.4L418.0 569.7L419.7 559.8L421.4 552.7L422.5 598.0L424.2 600.8L426.5 592.3L429.3 586.7L432.1 582.4L434.1 572.5L436.1 575.3L437.8 573.9L439.8 595.2L441.2 612.2L442.9 641.9L444.6 627.8L446.3 632.0L448.3 654.7L449.7 666.0L451.4 637.7L453.1 649.0L455.4 657.5L457.6 640.5L459.6 630.6L461.6 632.0L463.9 629.2L465.8 627.8L467.5 634.8L469.5 627.8L471.2 629.2L472.9 654.7L474.6 664.6L476.2 654.7L477.9 646.2L479.4 650.4L481.3 643.3L483.3 636.3L485.0 629.2L486.4 640.5L488.4 637.7L490.4 651.8L492.1 666.0L493.8 677.4L495.5 668.8L497.2 677.4L498.9 675.9L501.2 688.7L502.6 674.5L504.6 668.8L506.8 663.2L509.1 656.1L510.5 651.3L512.5 658.9L513.9 666.0L515.9 667.4L518.2 671.7L520.2 674.5L522.4 675.9L523.8 688.7L525.3 697.2L526.7 703.4L528.7 688.7L530.4 663.2L532.3 656.9L534.6 656.9L536.6 666.0L538.0 670.3L540.0 660.9L541.7 673.1L543.1 677.4L545.1 674.5L547.1 658.9L548.8 663.2L550.8 643.3L552.2 636.3L553.9 641.9L555.6 632.0L557.8 636.3L559.3 624.9L560.7 609.3L562.7 617.8L564.4 629.2L566.3 637.7L568.3 633.4L570.0 630.6L572.0 636.3L574.0 632.0L575.7 643.3L577.1 646.2L578.5 641.9L580.5 649.0L582.5 647.6L584.8 644.8L586.2 633.4L587.6 623.5L589.9 620.1L591.3 623.5L592.7 640.5L594.7 641.1L596.9 640.5L598.9 641.9L600.3 663.2L602.6 657.5L604.6 674.5L606.0 677.4L608.0 670.3L609.7 671.7L611.7 684.4L613.7 685.9L615.9 691.5L617.9 695.8L619.6 694.4L621.6 704.3L623.0 712.8L624.4 726.9L625.9 704.3L627.6 708.5L629.3 697.2L631.0 705.7L632.9 697.2L634.4 683.0L636.3 673.1L638.0 677.4L639.5 688.7L640.9 700.0L642.3 714.2L644.0 719.9L645.7 701.4L647.1 711.4L649.1 700.0L650.8 691.5L652.8 688.7L654.8 691.5L656.5 684.4L658.4 671.7L660.4 646.2L662.1 623.5L664.1 622.1L665.5 632.0L667.5 630.6L669.2 613.6L671.2 612.2L672.9 605.9L674.6 612.2L676.3 629.2L678.3 634.8L680.3 626.3L682.0 617.8L683.9 618.4L685.6 615.0L687.6 629.2L689.6 641.9L691.0 651.8L693.0 650.4L694.4 666.0L696.1 683.0L697.5 692.9L699.0 711.4L700.7 724.1L702.4 704.3L704.3 708.0L707.1 660.9L709.1 666.0L710.8 675.9L712.8 664.6L714.7 671.7L716.4 680.2L718.4 671.7L720.4 666.6L722.1 673.1L724.1 664.6L726.1 668.8L727.8 663.2L729.2 650.4L730.6 656.1L732.6 632.6L734.6 631.4L736.8 631.4L738.3 649.0L739.7 668.8L741.9 671.7L743.9 670.3L746.2 671.7L748.2 677.4L749.6 685.3L751.0 667.4L753.0 677.4L754.7 673.1L756.7 691.5L758.1 700.9L760.4 700.0L762.3 684.4L764.3 666.0L766.0 663.2L768.0 658.9L770.0 639.1L772.3 641.9L774.2 654.7L776.5 660.3L778.5 643.3L780.8 626.3L782.7 621.2L785.0 620.1L787.3 621.2L789.3 622.1L790.7 614.4L792.1 629.2L794.1 612.2L796.3 608.8L798.3 608.8L800.0 615.0L801.4 640.5L802.9 668.8L804.8 670.3L807.1 668.8L809.1 654.7L811.1 652.4L813.3 645.6L815.3 654.7L816.7 653.3L818.4 673.1L819.6 675.9L821.3 654.7L823.3 641.9L825.2 644.8L826.9 615.0L828.9 612.2L830.9 605.9L833.2 606.5L834.6 600.3L836.6 600.8L838.0 597.4L840.8 623.5L842.5 622.1L844.0 635.4L845.1 623.5L846.8 639.9L848.8 636.3L850.2 623.5L852.2 604.2L854.4 593.8L855.9 600.8L857.3 623.5L858.7 634.8L860.7 634.3L862.4 639.1L864.4 649.0L865.5 652.4L867.2 626.3L869.2 600.8L870.9 597.4L872.9 595.7L874.3 593.8L875.7 579.6L877.7 557.5L879.7 563.4L881.4 558.3L882.8 585.3L884.8 576.8L886.5 581.0L887.9 589.5L889.9 585.3L891.8 576.8L893.5 575.3L895.5 564.6L897.8 564.0L899.2 572.5L900.6 575.3L902.0 592.3L904.0 623.5L906.0 609.3L907.7 610.8L909.7 604.2L911.1 603.1L912.5 612.2L914.5 607.9L916.2 619.3L918.2 619.3L919.6 605.9L921.0 620.1L923.0 613.6L924.7 605.9L926.7 602.3L928.1 633.4L930.4 638.2L932.4 616.4L934.3 623.5L937.1 619.3L939.1 600.3L940.8 598.9L942.8 598.9L944.2 643.3L946.2 657.5L948.4 656.1L950.4 658.9L952.1 671.7L954.1 668.8L956.1 646.2L957.5 647.6L959.2 671.7L961.2 673.1L963.2 667.4L964.9 675.9L966.8 680.2L968.8 671.7L970.5 654.7L972.5 646.2L974.5 644.8L976.2 643.3L977.6 632.0L979.0 621.2L980.4 649.0L982.4 663.2L984.4 678.8L986.1 666.0L988.1 668.3L990.4 667.4L992.3 654.7L994.0 640.5L995.7 632.0L997.4 629.2L999.4 614.2L1000.8 617.8L1002.8 636.3L1004.5 627.8L1005.9 615.0L1007.9 630.6L1009.9 627.8L1012.2 626.3L1014.2 633.4L1016.4 641.9L1018.4 650.4L1020.1 641.9L1022.1 632.0L1024.1 649.0L1025.8 664.6L1027.8 677.4L1029.2 654.7L1031.4 666.0L1033.4 677.9L1035.7 678.8L1037.7 678.8L1040.5 679.6L1042.5 671.7L1044.2 681.6L1046.2 668.8L1048.2 665.4L1050.4 665.4L1052.4 671.7L1054.7 673.1L1056.7 674.5L1058.4 666.0L1060.3 654.1L1061.8 668.8L1063.7 670.3L1065.4 671.7L1067.4 688.7L1068.8 711.4L1070.8 725.5L1073.7 727.5L1075.4 728.4L1076.8 694.4L1077.9 653.3L1079.6 687.3L1081.6 683.0L1083.0 668.8L1084.4 666.0L1085.9 671.7L1087.8 684.4L1089.5 681.6L1091.0 697.2L1092.7 708.0L1094.4 694.4L1096.3 684.4L1098.0 685.3L1100.0 675.9L1101.7 673.1L1103.4 680.2L1105.1 673.1L1107.1 674.5L1109.1 657.5L1110.8 664.6L1112.8 668.8L1114.8 667.4L1116.5 657.5L1118.4 650.4L1120.4 653.3L1122.1 651.8L1124.1 652.4L1125.5 668.8L1127.5 675.9L1129.2 680.2L1131.2 674.5L1133.2 660.3L1134.6 675.9L1136.3 671.7L1138.3 666.0L1140.3 668.8L1142.0 695.8L1143.4 691.5L1145.4 703.4L1146.8 677.4L1148.2 661.8L1149.6 668.8L1151.0 651.8L1153.0 647.6L1154.7 654.7L1156.7 651.8L1158.7 655.5L1161.5 649.4L1163.1 652.0L1164.5 648.4L1166.1 646.4L1167.5 643.4L1169.1 626.3L1170.5 606.2L1172.1 605.2L1173.7 604.2L1175.6 602.2L1177.2 601.2L1178.6 604.2L1179.8 610.2L1181.2 605.2L1182.6 611.2L1184.2 610.2L1185.2 613.2L1186.8 600.2L1188.2 599.2L1189.2 598.2L1190.2 610.2L1191.8 620.3L1193.2 626.7L1194.6 622.3L1196.2 611.2L1197.8 606.2L1199.2 592.2L1200.2 583.1L1201.4 582.1L1202.6 579.1L1204.3 583.1L1205.7 592.2L1206.9 600.2L1208.3 597.2L1209.3 595.2L1210.7 601.2L1212.3 600.2L1213.9 604.2L1215.3 605.2L1216.7 607.8L1217.9 590.2L1219.3 599.2L1220.7 597.2L1221.9 592.2L1222.9 583.1L1224.3 580.1L1225.5 578.7L1225.5 767L13.4 767Z" fill="url(#gob)" clip-path="url(#cob)"/>
<path d="M13.4 650.4L16.2 678.8L19.1 673.1L21.3 675.9L24.2 671.1L27.6 674.5L30.4 653.3L32.7 674.5L35.5 677.4L38.3 678.8L40.6 673.1L43.4 642.8L46.3 656.1L49.1 658.9L51.9 663.7L53.9 658.9L55.3 666.0L57.6 688.7L59.6 739.7L61.9 746.8L64.4 741.1L66.7 739.7L68.7 741.1L70.4 720.4L72.9 728.4L75.7 726.9L78.0 711.4L81.7 649.0L83.1 666.0L85.9 698.6L89.3 692.9L92.2 697.2L95.0 695.8L97.8 675.9L100.1 687.3L102.1 685.9L104.4 705.7L106.3 677.4L109.2 657.5L112.0 651.8L114.3 654.7L117.1 644.8L119.1 630.6L121.1 633.4L122.8 656.1L125.6 657.5L128.4 670.3L131.3 668.8L133.3 663.2L135.2 634.8L136.9 641.9L138.9 639.1L140.6 606.5L143.2 632.0L145.4 634.8L147.4 622.1L148.8 634.8L150.8 622.1L153.1 624.9L155.1 632.0L157.4 651.8L160.2 671.1L163.0 667.4L165.3 661.8L167.3 629.2L168.7 612.2L171.5 620.7L174.4 590.9L177.2 586.7L179.2 585.3L180.9 554.1L183.4 547.6L185.7 555.5L187.7 566.8L191.4 565.4L194.2 561.2L196.5 556.9L198.4 569.7L200.4 582.4L202.7 581.0L205.5 581.6L208.4 572.5L210.6 563.4L212.9 557.5L215.4 564.0L217.7 569.7L219.1 592.3L220.5 623.5L222.5 590.9L224.5 629.2L226.8 623.5L228.8 615.0L231.0 613.6L233.0 648.4L235.3 629.2L237.5 624.9L240.1 622.1L242.4 627.8L244.6 633.4L246.6 626.3L248.5 623.5L250.8 616.4L252.8 602.3L255.0 590.9L257.0 572.5L259.3 565.4L261.3 576.8L262.7 586.7L264.4 578.2L266.1 588.1L267.8 588.9L268.9 636.3L271.2 633.4L272.9 619.3L275.1 617.8L276.8 634.8L278.5 632.0L280.8 646.2L282.5 630.6L284.2 636.3L286.2 620.7L288.7 618.4L291.0 623.5L293.3 636.3L295.3 629.2L296.7 640.5L298.7 637.7L300.9 654.7L302.9 656.1L305.2 653.3L307.2 627.8L308.9 617.8L310.8 639.1L312.3 651.8L314.2 636.3L316.5 639.1L318.8 626.3L320.8 608.8L322.2 620.7L324.2 615.0L325.9 620.7L327.8 666.0L329.3 667.4L330.7 677.4L332.7 663.2L334.9 660.3L336.3 668.8L338.3 680.2L340.6 674.5L342.6 676.8L344.3 688.7L345.7 697.2L347.7 691.5L349.9 688.7L351.4 671.7L353.3 657.5L355.6 658.9L357.9 641.1L359.9 647.6L361.8 651.8L364.1 643.3L366.1 646.2L368.9 654.7L371.2 649.0L373.2 629.2L375.4 617.8L377.4 596.6L379.4 592.3L381.7 575.3L384.5 576.8L386.8 566.8L389.6 565.4L391.6 576.8L393.6 572.5L395.9 579.6L398.1 585.3L400.1 598.0L401.5 605.1L403.2 614.4L405.2 606.5L407.2 602.3L408.9 579.6L410.9 561.2L412.6 549.3L414.3 566.8L416.3 565.4L418.0 569.7L419.7 559.8L421.4 552.7L422.5 598.0L424.2 600.8L426.5 592.3L429.3 586.7L432.1 582.4L434.1 572.5L436.1 575.3L437.8 573.9L439.8 595.2L441.2 612.2L442.9 641.9L444.6 627.8L446.3 632.0L448.3 654.7L449.7 666.0L451.4 637.7L453.1 649.0L455.4 657.5L457.6 640.5L459.6 630.6L461.6 632.0L463.9 629.2L465.8 627.8L467.5 634.8L469.5 627.8L471.2 629.2L472.9 654.7L474.6 664.6L476.2 654.7L477.9 646.2L479.4 650.4L481.3 643.3L483.3 636.3L485.0 629.2L486.4 640.5L488.4 637.7L490.4 651.8L492.1 666.0L493.8 677.4L495.5 668.8L497.2 677.4L498.9 675.9L501.2 688.7L502.6 674.5L504.6 668.8L506.8 663.2L509.1 656.1L510.5 651.3L512.5 658.9L513.9 666.0L515.9 667.4L518.2 671.7L520.2 674.5L522.4 675.9L523.8 688.7L525.3 697.2L526.7 703.4L528.7 688.7L530.4 663.2L532.3 656.9L534.6 656.9L536.6 666.0L538.0 670.3L540.0 660.9L541.7 673.1L543.1 677.4L545.1 674.5L547.1 658.9L548.8 663.2L550.8 643.3L552.2 636.3L553.9 641.9L555.6 632.0L557.8 636.3L559.3 624.9L560.7 609.3L562.7 617.8L564.4 629.2L566.3 637.7L568.3 633.4L570.0 630.6L572.0 636.3L574.0 632.0L575.7 643.3L577.1 646.2L578.5 641.9L580.5 649.0L582.5 647.6L584.8 644.8L586.2 633.4L587.6 623.5L589.9 620.1L591.3 623.5L592.7 640.5L594.7 641.1L596.9 640.5L598.9 641.9L600.3 663.2L602.6 657.5L604.6 674.5L606.0 677.4L608.0 670.3L609.7 671.7L611.7 684.4L613.7 685.9L615.9 691.5L617.9 695.8L619.6 694.4L621.6 704.3L623.0 712.8L624.4 726.9L625.9 704.3L627.6 708.5L629.3 697.2L631.0 705.7L632.9 697.2L634.4 683.0L636.3 673.1L638.0 677.4L639.5 688.7L640.9 700.0L642.3 714.2L644.0 719.9L645.7 701.4L647.1 711.4L649.1 700.0L650.8 691.5L652.8 688.7L654.8 691.5L656.5 684.4L658.4 671.7L660.4 646.2L662.1 623.5L664.1 622.1L665.5 632.0L667.5 630.6L669.2 613.6L671.2 612.2L672.9 605.9L674.6 612.2L676.3 629.2L678.3 634.8L680.3 626.3L682.0 617.8L683.9 618.4L685.6 615.0L687.6 629.2L689.6 641.9L691.0 651.8L693.0 650.4L694.4 666.0L696.1 683.0L697.5 692.9L699.0 711.4L700.7 724.1L702.4 704.3L704.3 708.0L707.1 660.9L709.1 666.0L710.8 675.9L712.8 664.6L714.7 671.7L716.4 680.2L718.4 671.7L720.4 666.6L722.1 673.1L724.1 664.6L726.1 668.8L727.8 663.2L729.2 650.4L730.6 656.1L732.6 632.6L734.6 631.4L736.8 631.4L738.3 649.0L739.7 668.8L741.9 671.7L743.9 670.3L746.2 671.7L748.2 677.4L749.6 685.3L751.0 667.4L753.0 677.4L754.7 673.1L756.7 691.5L758.1 700.9L760.4 700.0L762.3 684.4L764.3 666.0L766.0 663.2L768.0 658.9L770.0 639.1L772.3 641.9L774.2 654.7L776.5 660.3L778.5 643.3L780.8 626.3L782.7 621.2L785.0 620.1L787.3 621.2L789.3 622.1L790.7 614.4L792.1 629.2L794.1 612.2L796.3 608.8L798.3 608.8L800.0 615.0L801.4 640.5L802.9 668.8L804.8 670.3L807.1 668.8L809.1 654.7L811.1 652.4L813.3 645.6L815.3 654.7L816.7 653.3L818.4 673.1L819.6 675.9L821.3 654.7L823.3 641.9L825.2 644.8L826.9 615.0L828.9 612.2L830.9 605.9L833.2 606.5L834.6 600.3L836.6 600.8L838.0 597.4L840.8 623.5L842.5 622.1L844.0 635.4L845.1 623.5L846.8 639.9L848.8 636.3L850.2 623.5L852.2 604.2L854.4 593.8L855.9 600.8L857.3 623.5L858.7 634.8L860.7 634.3L862.4 639.1L864.4 649.0L865.5 652.4L867.2 626.3L869.2 600.8L870.9 597.4L872.9 595.7L874.3 593.8L875.7 579.6L877.7 557.5L879.7 563.4L881.4 558.3L882.8 585.3L884.8 576.8L886.5 581.0L887.9 589.5L889.9 585.3L891.8 576.8L893.5 575.3L895.5 564.6L897.8 564.0L899.2 572.5L900.6 575.3L902.0 592.3L904.0 623.5L906.0 609.3L907.7 610.8L909.7 604.2L911.1 603.1L912.5 612.2L914.5 607.9L916.2 619.3L918.2 619.3L919.6 605.9L921.0 620.1L923.0 613.6L924.7 605.9L926.7 602.3L928.1 633.4L930.4 638.2L932.4 616.4L934.3 623.5L937.1 619.3L939.1 600.3L940.8 598.9L942.8 598.9L944.2 643.3L946.2 657.5L948.4 656.1L950.4 658.9L952.1 671.7L954.1 668.8L956.1 646.2L957.5 647.6L959.2 671.7L961.2 673.1L963.2 667.4L964.9 675.9L966.8 680.2L968.8 671.7L970.5 654.7L972.5 646.2L974.5 644.8L976.2 643.3L977.6 632.0L979.0 621.2L980.4 649.0L982.4 663.2L984.4 678.8L986.1 666.0L988.1 668.3L990.4 667.4L992.3 654.7L994.0 640.5L995.7 632.0L997.4 629.2L999.4 614.2L1000.8 617.8L1002.8 636.3L1004.5 627.8L1005.9 615.0L1007.9 630.6L1009.9 627.8L1012.2 626.3L1014.2 633.4L1016.4 641.9L1018.4 650.4L1020.1 641.9L1022.1 632.0L1024.1 649.0L1025.8 664.6L1027.8 677.4L1029.2 654.7L1031.4 666.0L1033.4 677.9L1035.7 678.8L1037.7 678.8L1040.5 679.6L1042.5 671.7L1044.2 681.6L1046.2 668.8L1048.2 665.4L1050.4 665.4L1052.4 671.7L1054.7 673.1L1056.7 674.5L1058.4 666.0L1060.3 654.1L1061.8 668.8L1063.7 670.3L1065.4 671.7L1067.4 688.7L1068.8 711.4L1070.8 725.5L1073.7 727.5L1075.4 728.4L1076.8 694.4L1077.9 653.3L1079.6 687.3L1081.6 683.0L1083.0 668.8L1084.4 666.0L1085.9 671.7L1087.8 684.4L1089.5 681.6L1091.0 697.2L1092.7 708.0L1094.4 694.4L1096.3 684.4L1098.0 685.3L1100.0 675.9L1101.7 673.1L1103.4 680.2L1105.1 673.1L1107.1 674.5L1109.1 657.5L1110.8 664.6L1112.8 668.8L1114.8 667.4L1116.5 657.5L1118.4 650.4L1120.4 653.3L1122.1 651.8L1124.1 652.4L1125.5 668.8L1127.5 675.9L1129.2 680.2L1131.2 674.5L1133.2 660.3L1134.6 675.9L1136.3 671.7L1138.3 666.0L1140.3 668.8L1142.0 695.8L1143.4 691.5L1145.4 703.4L1146.8 677.4L1148.2 661.8L1149.6 668.8L1151.0 651.8L1153.0 647.6L1154.7 654.7L1156.7 651.8L1158.7 655.5L1161.5 649.4L1163.1 652.0L1164.5 648.4L1166.1 646.4L1167.5 643.4L1169.1 626.3L1170.5 606.2L1172.1 605.2L1173.7 604.2L1175.6 602.2L1177.2 601.2L1178.6 604.2L1179.8 610.2L1181.2 605.2L1182.6 611.2L1184.2 610.2L1185.2 613.2L1186.8 600.2L1188.2 599.2L1189.2 598.2L1190.2 610.2L1191.8 620.3L1193.2 626.7L1194.6 622.3L1196.2 611.2L1197.8 606.2L1199.2 592.2L1200.2 583.1L1201.4 582.1L1202.6 579.1L1204.3 583.1L1205.7 592.2L1206.9 600.2L1208.3 597.2L1209.3 595.2L1210.7 601.2L1212.3 600.2L1213.9 604.2L1215.3 605.2L1216.7 607.8L1217.9 590.2L1219.3 599.2L1220.7 597.2L1221.9 592.2L1222.9 583.1L1224.3 580.1L1225.5 578.7L1225.5 523L13.4 523Z" fill="url(#gos)" clip-path="url(#cos)"/>
<path d="M13.4 650.4L16.2 678.8L19.1 673.1L21.3 675.9L24.2 671.1L27.6 674.5L30.4 653.3L32.7 674.5L35.5 677.4L38.3 678.8L40.6 673.1L43.4 642.8L46.3 656.1L49.1 658.9L51.9 663.7L53.9 658.9L55.3 666.0L57.6 688.7L59.6 739.7L61.9 746.8L64.4 741.1L66.7 739.7L68.7 741.1L70.4 720.4L72.9 728.4L75.7 726.9L78.0 711.4L81.7 649.0L83.1 666.0L85.9 698.6L89.3 692.9L92.2 697.2L95.0 695.8L97.8 675.9L100.1 687.3L102.1 685.9L104.4 705.7L106.3 677.4L109.2 657.5L112.0 651.8L114.3 654.7L117.1 644.8L119.1 630.6L121.1 633.4L122.8 656.1L125.6 657.5L128.4 670.3L131.3 668.8L133.3 663.2L135.2 634.8L136.9 641.9L138.9 639.1L140.6 606.5L143.2 632.0L145.4 634.8L147.4 622.1L148.8 634.8L150.8 622.1L153.1 624.9L155.1 632.0L157.4 651.8L160.2 671.1L163.0 667.4L165.3 661.8L167.3 629.2L168.7 612.2L171.5 620.7L174.4 590.9L177.2 586.7L179.2 585.3L180.9 554.1L183.4 547.6L185.7 555.5L187.7 566.8L191.4 565.4L194.2 561.2L196.5 556.9L198.4 569.7L200.4 582.4L202.7 581.0L205.5 581.6L208.4 572.5L210.6 563.4L212.9 557.5L215.4 564.0L217.7 569.7L219.1 592.3L220.5 623.5L222.5 590.9L224.5 629.2L226.8 623.5L228.8 615.0L231.0 613.6L233.0 648.4L235.3 629.2L237.5 624.9L240.1 622.1L242.4 627.8L244.6 633.4L246.6 626.3L248.5 623.5L250.8 616.4L252.8 602.3L255.0 590.9L257.0 572.5L259.3 565.4L261.3 576.8L262.7 586.7L264.4 578.2L266.1 588.1L267.8 588.9L268.9 636.3L271.2 633.4L272.9 619.3L275.1 617.8L276.8 634.8L278.5 632.0L280.8 646.2L282.5 630.6L284.2 636.3L286.2 620.7L288.7 618.4L291.0 623.5L293.3 636.3L295.3 629.2L296.7 640.5L298.7 637.7L300.9 654.7L302.9 656.1L305.2 653.3L307.2 627.8L308.9 617.8L310.8 639.1L312.3 651.8L314.2 636.3L316.5 639.1L318.8 626.3L320.8 608.8L322.2 620.7L324.2 615.0L325.9 620.7L327.8 666.0L329.3 667.4L330.7 677.4L332.7 663.2L334.9 660.3L336.3 668.8L338.3 680.2L340.6 674.5L342.6 676.8L344.3 688.7L345.7 697.2L347.7 691.5L349.9 688.7L351.4 671.7L353.3 657.5L355.6 658.9L357.9 641.1L359.9 647.6L361.8 651.8L364.1 643.3L366.1 646.2L368.9 654.7L371.2 649.0L373.2 629.2L375.4 617.8L377.4 596.6L379.4 592.3L381.7 575.3L384.5 576.8L386.8 566.8L389.6 565.4L391.6 576.8L393.6 572.5L395.9 579.6L398.1 585.3L400.1 598.0L401.5 605.1L403.2 614.4L405.2 606.5L407.2 602.3L408.9 579.6L410.9 561.2L412.6 549.3L414.3 566.8L416.3 565.4L418.0 569.7L419.7 559.8L421.4 552.7L422.5 598.0L424.2 600.8L426.5 592.3L429.3 586.7L432.1 582.4L434.1 572.5L436.1 575.3L437.8 573.9L439.8 595.2L441.2 612.2L442.9 641.9L444.6 627.8L446.3 632.0L448.3 654.7L449.7 666.0L451.4 637.7L453.1 649.0L455.4 657.5L457.6 640.5L459.6 630.6L461.6 632.0L463.9 629.2L465.8 627.8L467.5 634.8L469.5 627.8L471.2 629.2L472.9 654.7L474.6 664.6L476.2 654.7L477.9 646.2L479.4 650.4L481.3 643.3L483.3 636.3L485.0 629.2L486.4 640.5L488.4 637.7L490.4 651.8L492.1 666.0L493.8 677.4L495.5 668.8L497.2 677.4L498.9 675.9L501.2 688.7L502.6 674.5L504.6 668.8L506.8 663.2L509.1 656.1L510.5 651.3L512.5 658.9L513.9 666.0L515.9 667.4L518.2 671.7L520.2 674.5L522.4 675.9L523.8 688.7L525.3 697.2L526.7 703.4L528.7 688.7L530.4 663.2L532.3 656.9L534.6 656.9L536.6 666.0L538.0 670.3L540.0 660.9L541.7 673.1L543.1 677.4L545.1 674.5L547.1 658.9L548.8 663.2L550.8 643.3L552.2 636.3L553.9 641.9L555.6 632.0L557.8 636.3L559.3 624.9L560.7 609.3L562.7 617.8L564.4 629.2L566.3 637.7L568.3 633.4L570.0 630.6L572.0 636.3L574.0 632.0L575.7 643.3L577.1 646.2L578.5 641.9L580.5 649.0L582.5 647.6L584.8 644.8L586.2 633.4L587.6 623.5L589.9 620.1L591.3 623.5L592.7 640.5L594.7 641.1L596.9 640.5L598.9 641.9L600.3 663.2L602.6 657.5L604.6 674.5L606.0 677.4L608.0 670.3L609.7 671.7L611.7 684.4L613.7 685.9L615.9 691.5L617.9 695.8L619.6 694.4L621.6 704.3L623.0 712.8L624.4 726.9L625.9 704.3L627.6 708.5L629.3 697.2L631.0 705.7L632.9 697.2L634.4 683.0L636.3 673.1L638.0 677.4L639.5 688.7L640.9 700.0L642.3 714.2L644.0 719.9L645.7 701.4L647.1 711.4L649.1 700.0L650.8 691.5L652.8 688.7L654.8 691.5L656.5 684.4L658.4 671.7L660.4 646.2L662.1 623.5L664.1 622.1L665.5 632.0L667.5 630.6L669.2 613.6L671.2 612.2L672.9 605.9L674.6 612.2L676.3 629.2L678.3 634.8L680.3 626.3L682.0 617.8L683.9 618.4L685.6 615.0L687.6 629.2L689.6 641.9L691.0 651.8L693.0 650.4L694.4 666.0L696.1 683.0L697.5 692.9L699.0 711.4L700.7 724.1L702.4 704.3L704.3 708.0L707.1 660.9L709.1 666.0L710.8 675.9L712.8 664.6L714.7 671.7L716.4 680.2L718.4 671.7L720.4 666.6L722.1 673.1L724.1 664.6L726.1 668.8L727.8 663.2L729.2 650.4L730.6 656.1L732.6 632.6L734.6 631.4L736.8 631.4L738.3 649.0L739.7 668.8L741.9 671.7L743.9 670.3L746.2 671.7L748.2 677.4L749.6 685.3L751.0 667.4L753.0 677.4L754.7 673.1L756.7 691.5L758.1 700.9L760.4 700.0L762.3 684.4L764.3 666.0L766.0 663.2L768.0 658.9L770.0 639.1L772.3 641.9L774.2 654.7L776.5 660.3L778.5 643.3L780.8 626.3L782.7 621.2L785.0 620.1L787.3 621.2L789.3 622.1L790.7 614.4L792.1 629.2L794.1 612.2L796.3 608.8L798.3 608.8L800.0 615.0L801.4 640.5L802.9 668.8L804.8 670.3L807.1 668.8L809.1 654.7L811.1 652.4L813.3 645.6L815.3 654.7L816.7 653.3L818.4 673.1L819.6 675.9L821.3 654.7L823.3 641.9L825.2 644.8L826.9 615.0L828.9 612.2L830.9 605.9L833.2 606.5L834.6 600.3L836.6 600.8L838.0 597.4L840.8 623.5L842.5 622.1L844.0 635.4L845.1 623.5L846.8 639.9L848.8 636.3L850.2 623.5L852.2 604.2L854.4 593.8L855.9 600.8L857.3 623.5L858.7 634.8L860.7 634.3L862.4 639.1L864.4 649.0L865.5 652.4L867.2 626.3L869.2 600.8L870.9 597.4L872.9 595.7L874.3 593.8L875.7 579.6L877.7 557.5L879.7 563.4L881.4 558.3L882.8 585.3L884.8 576.8L886.5 581.0L887.9 589.5L889.9 585.3L891.8 576.8L893.5 575.3L895.5 564.6L897.8 564.0L899.2 572.5L900.6 575.3L902.0 592.3L904.0 623.5L906.0 609.3L907.7 610.8L909.7 604.2L911.1 603.1L912.5 612.2L914.5 607.9L916.2 619.3L918.2 619.3L919.6 605.9L921.0 620.1L923.0 613.6L924.7 605.9L926.7 602.3L928.1 633.4L930.4 638.2L932.4 616.4L934.3 623.5L937.1 619.3L939.1 600.3L940.8 598.9L942.8 598.9L944.2 643.3L946.2 657.5L948.4 656.1L950.4 658.9L952.1 671.7L954.1 668.8L956.1 646.2L957.5 647.6L959.2 671.7L961.2 673.1L963.2 667.4L964.9 675.9L966.8 680.2L968.8 671.7L970.5 654.7L972.5 646.2L974.5 644.8L976.2 643.3L977.6 632.0L979.0 621.2L980.4 649.0L982.4 663.2L984.4 678.8L986.1 666.0L988.1 668.3L990.4 667.4L992.3 654.7L994.0 640.5L995.7 632.0L997.4 629.2L999.4 614.2L1000.8 617.8L1002.8 636.3L1004.5 627.8L1005.9 615.0L1007.9 630.6L1009.9 627.8L1012.2 626.3L1014.2 633.4L1016.4 641.9L1018.4 650.4L1020.1 641.9L1022.1 632.0L1024.1 649.0L1025.8 664.6L1027.8 677.4L1029.2 654.7L1031.4 666.0L1033.4 677.9L1035.7 678.8L1037.7 678.8L1040.5 679.6L1042.5 671.7L1044.2 681.6L1046.2 668.8L1048.2 665.4L1050.4 665.4L1052.4 671.7L1054.7 673.1L1056.7 674.5L1058.4 666.0L1060.3 654.1L1061.8 668.8L1063.7 670.3L1065.4 671.7L1067.4 688.7L1068.8 711.4L1070.8 725.5L1073.7 727.5L1075.4 728.4L1076.8 694.4L1077.9 653.3L1079.6 687.3L1081.6 683.0L1083.0 668.8L1084.4 666.0L1085.9 671.7L1087.8 684.4L1089.5 681.6L1091.0 697.2L1092.7 708.0L1094.4 694.4L1096.3 684.4L1098.0 685.3L1100.0 675.9L1101.7 673.1L1103.4 680.2L1105.1 673.1L1107.1 674.5L1109.1 657.5L1110.8 664.6L1112.8 668.8L1114.8 667.4L1116.5 657.5L1118.4 650.4L1120.4 653.3L1122.1 651.8L1124.1 652.4L1125.5 668.8L1127.5 675.9L1129.2 680.2L1131.2 674.5L1133.2 660.3L1134.6 675.9L1136.3 671.7L1138.3 666.0L1140.3 668.8L1142.0 695.8L1143.4 691.5L1145.4 703.4L1146.8 677.4L1148.2 661.8L1149.6 668.8L1151.0 651.8L1153.0 647.6L1154.7 654.7L1156.7 651.8L1158.7 655.5L1161.5 649.4L1163.1 652.0L1164.5 648.4L1166.1 646.4L1167.5 643.4L1169.1 626.3L1170.5 606.2L1172.1 605.2L1173.7 604.2L1175.6 602.2L1177.2 601.2L1178.6 604.2L1179.8 610.2L1181.2 605.2L1182.6 611.2L1184.2 610.2L1185.2 613.2L1186.8 600.2L1188.2 599.2L1189.2 598.2L1190.2 610.2L1191.8 620.3L1193.2 626.7L1194.6 622.3L1196.2 611.2L1197.8 606.2L1199.2 592.2L1200.2 583.1L1201.4 582.1L1202.6 579.1L1204.3 583.1L1205.7 592.2L1206.9 600.2L1208.3 597.2L1209.3 595.2L1210.7 601.2L1212.3 600.2L1213.9 604.2L1215.3 605.2L1216.7 607.8L1217.9 590.2L1219.3 599.2L1220.7 597.2L1221.9 592.2L1222.9 583.1L1224.3 580.1L1225.5 578.7" fill="none" stroke="#7e57c2" stroke-width="1.4" stroke-linejoin="round" clip-path="url(#crsi)"/>
<path d="M13.4 643.3L15.6 648.5L18.5 654.7L21.3 659.4L24.2 663.2L27.0 665.7L29.8 667.4L32.8 668.9L35.5 670.3L37.6 672.1L39.8 673.1L42.5 671.4L45.4 668.8L48.3 666.9L51.1 665.4L53.3 664.7L55.3 665.4L57.5 669.3L59.6 674.5L61.7 679.9L63.8 685.9L66.0 692.8L68.1 700.0L70.2 706.7L72.3 712.8L74.6 718.3L76.6 722.7L78.0 725.3L79.4 726.1L81.4 724.6L83.7 721.3L86.4 715.8L89.3 709.9L92.2 705.5L95.0 701.4L97.9 696.9L100.7 692.9L103.0 690.2L104.9 688.7L106.3 689.2L107.8 689.3L109.7 686.2L112.0 681.6L114.8 676.0L117.7 670.3L120.5 665.2L123.3 660.9L126.2 658.1L129.0 656.1L131.8 654.6L134.7 653.3L137.5 651.2L140.3 649.0L143.2 647.0L146.0 644.8L148.9 642.0L151.7 639.1L154.4 635.8L156.8 633.4L158.5 633.7L160.2 635.4L162.3 638.2L164.4 641.1L165.9 642.7L167.3 643.3L169.3 642.7L171.5 641.1L173.7 639.0L175.8 636.3L177.7 633.3L179.5 629.2L181.1 622.8L182.9 615.0L184.9 605.8L187.1 596.6L189.2 589.1L191.4 582.4L193.5 576.2L195.6 571.1L197.7 568.0L199.9 566.3L202.1 565.4L204.1 565.4L205.6 566.6L206.9 568.3L208.3 570.3L209.8 571.9L211.8 571.7L214.0 571.1L216.1 571.3L218.3 572.5L220.4 575.6L222.5 579.6L224.7 583.8L226.8 588.1L228.9 592.3L231.0 596.6L233.2 601.5L235.3 606.5L237.4 611.6L239.5 616.4L241.6 620.4L243.8 623.5L246.1 625.6L248.5 626.3L251.3 625.1L254.2 622.1L257.0 616.8L259.8 610.8L262.8 605.3L265.5 600.8L266.9 598.8L268.3 598.0L271.1 597.4L274.0 598.0L276.2 601.0L278.3 605.1L280.4 609.3L282.5 613.6L284.6 617.2L286.8 620.7L288.8 624.5L291.0 627.8L293.8 629.4L296.7 630.6L298.8 632.0L300.9 633.4L303.8 635.0L306.6 636.3L308.8 636.2L310.8 636.3L313.0 638.1L315.1 639.9L317.2 640.7L319.3 640.5L321.5 638.5L323.6 636.3L325.5 635.1L327.3 634.8L328.9 635.8L330.7 637.7L332.7 640.3L334.9 643.3L337.0 646.0L339.2 649.0L341.8 652.9L344.3 657.5L346.1 663.2L347.7 668.8L349.4 673.6L351.1 676.8L352.8 676.6L354.8 675.1L357.5 673.6L360.4 671.7L363.4 669.0L366.1 666.0L368.3 663.7L370.3 660.9L372.5 656.8L374.6 651.8L376.7 646.5L378.8 640.5L381.0 633.4L383.1 626.3L385.2 620.6L387.4 615.0L389.5 608.7L391.6 602.3L393.5 595.5L395.3 589.5L396.8 585.3L398.1 582.4L399.5 580.9L401.0 580.4L402.6 581.2L404.4 582.4L406.4 583.7L408.6 584.4L410.7 583.6L412.9 582.4L415.0 582.0L417.1 581.6L419.3 580.4L421.4 579.6L422.8 580.3L424.2 581.0L426.3 580.1L428.4 578.7L430.4 577.3L432.1 575.9L433.6 574.9L435.0 574.8L436.6 576.0L438.4 578.2L440.0 581.2L441.8 585.3L443.5 590.7L445.4 596.6L447.5 602.3L449.7 607.9L451.8 613.0L453.9 617.8L456.1 622.9L458.2 627.8L460.3 631.9L462.4 635.4L464.6 638.1L466.7 639.9L468.8 640.4L470.9 640.5L473.0 641.5L475.2 642.2L477.6 641.8L479.9 641.1L482.1 640.6L484.2 640.5L486.3 640.8L488.4 641.9L490.5 644.5L492.7 647.6L494.8 650.5L496.9 653.3L499.0 655.5L501.2 657.5L503.3 659.7L505.4 661.8L507.5 663.7L509.7 665.4L511.8 667.0L513.9 668.3L516.0 669.0L518.2 669.4L520.3 669.8L522.4 670.3L524.6 671.4L526.7 672.5L528.1 673.0L529.5 673.1L531.5 672.3L533.8 671.7L535.9 672.5L538.0 673.7L540.1 674.3L542.3 674.5L544.4 674.5L546.5 674.0L548.6 672.7L550.8 670.3L552.9 665.8L555.0 660.9L557.1 657.7L559.3 654.7L561.4 651.2L563.5 647.6L565.6 644.3L567.8 641.1L569.9 637.7L572.0 634.8L573.7 633.3L575.4 632.6L577.2 632.7L579.1 633.4L581.2 634.8L583.3 636.3L585.5 637.5L587.6 638.2L589.7 637.8L591.8 637.1L594.0 637.2L596.1 637.7L598.2 638.6L600.3 639.9L602.5 641.9L604.6 644.2L606.7 646.4L608.8 649.0L611.0 652.2L613.1 656.1L615.2 660.8L617.4 666.0L619.5 671.5L621.6 676.8L623.5 681.6L625.3 685.9L626.9 689.0L628.7 691.5L630.8 694.0L632.9 695.8L635.1 696.0L637.2 695.8L638.7 696.0L640.0 696.6L641.7 698.0L643.4 699.5L645.2 700.6L647.1 701.2L649.2 700.6L651.4 699.5L653.5 698.2L655.6 696.6L657.7 695.1L659.9 692.9L662.0 689.2L664.1 684.4L666.2 679.2L668.4 673.1L670.5 665.5L672.6 657.5L674.7 650.2L676.9 643.3L679.0 637.2L681.1 632.0L682.7 627.8L684.5 624.9L687.5 624.0L690.5 624.4L692.4 625.6L693.9 627.8L695.3 630.8L696.7 634.8L698.1 640.4L699.5 646.2L700.9 650.6L702.4 654.7L703.9 658.7L705.8 663.2L708.5 669.7L711.3 675.9L713.6 679.4L715.6 681.6L717.0 683.2L718.4 683.6L720.5 682.3L722.7 679.6L724.8 674.9L726.9 670.3L729.0 668.1L731.2 666.6L733.3 664.2L735.4 661.8L737.5 659.6L739.7 658.1L741.8 657.9L743.9 658.1L746.0 657.7L748.2 657.5L750.3 658.1L752.4 659.8L754.5 663.2L756.7 667.4L758.8 671.9L760.9 675.9L762.7 678.3L764.6 679.3L767.0 678.6L769.4 676.8L771.6 674.3L773.7 671.7L775.8 669.9L777.9 667.4L780.1 662.3L782.2 656.1L784.3 649.5L786.4 643.3L788.6 638.7L790.7 634.8L792.8 631.6L794.9 628.6L797.0 624.6L799.2 622.1L802.0 623.8L804.8 627.2L807.1 630.3L809.1 633.4L811.2 636.2L813.3 639.1L815.5 642.5L817.6 646.2L819.8 649.9L821.8 653.3L823.6 656.0L825.2 656.9L827.0 654.5L828.9 650.4L831.0 645.6L833.2 640.5L835.3 636.0L837.4 632.0L839.6 629.0L841.7 626.3L843.8 623.0L845.9 620.1L848.1 618.7L850.2 617.8L852.4 616.7L854.4 615.9L855.9 615.3L857.3 615.9L859.3 618.6L861.5 622.1L864.1 626.1L866.6 628.6L868.4 626.9L870.0 623.5L872.1 620.1L874.3 616.4L876.4 612.7L878.5 608.8L880.6 604.9L882.8 600.8L884.9 596.4L887.0 591.8L889.1 586.9L891.3 582.4L893.4 579.2L895.5 576.8L897.6 574.6L899.8 573.9L901.9 576.1L904.0 579.6L906.1 583.1L908.3 586.7L910.4 589.6L912.5 592.3L914.7 595.4L916.8 598.6L918.9 601.9L921.0 605.1L923.2 607.7L925.3 609.9L927.4 611.9L929.5 613.6L931.6 614.9L933.8 615.9L936.2 616.4L938.5 616.4L940.3 615.0L941.9 614.2L943.7 616.0L945.6 619.3L947.7 623.3L949.8 627.8L952.0 632.1L954.1 636.3L956.2 639.8L958.3 643.3L960.5 647.5L962.6 651.8L964.8 656.6L966.8 660.9L968.3 663.8L969.7 665.4L971.7 665.7L973.9 664.6L976.0 661.6L978.2 658.9L981.0 659.3L983.8 660.3L986.1 660.6L988.1 660.3L990.2 659.2L992.3 657.5L994.5 655.5L996.6 653.3L998.7 651.0L1000.8 649.0L1003.0 648.4L1005.1 647.6L1007.2 645.1L1009.3 641.9L1011.5 638.3L1013.6 634.8L1015.7 632.6L1017.8 631.2L1020.4 630.5L1022.9 631.2L1024.7 634.0L1026.3 637.7L1028.4 641.2L1030.6 644.8L1032.7 648.6L1034.8 652.4L1037.0 655.7L1039.1 658.9L1041.2 662.5L1043.3 666.0L1045.5 669.2L1047.6 671.7L1049.7 672.6L1051.8 673.1L1054.0 674.3L1056.1 675.1L1058.2 674.4L1060.3 673.1L1062.5 671.3L1064.6 670.3L1066.7 671.7L1068.8 674.5L1071.0 678.6L1073.1 683.0L1075.0 687.4L1076.8 690.7L1078.4 690.8L1080.2 690.1L1082.3 690.4L1084.4 691.0L1086.6 691.8L1088.7 692.9L1090.8 694.9L1092.9 695.8L1095.1 692.8L1097.2 688.7L1099.3 685.5L1101.4 683.0L1103.5 682.0L1105.7 681.6L1108.5 681.0L1111.4 680.2L1113.6 679.1L1115.6 677.4L1117.7 673.9L1119.9 670.3L1122.0 667.5L1124.1 665.4L1126.2 664.7L1128.4 664.6L1130.3 665.0L1132.6 665.4L1134.9 665.3L1137.4 665.0L1139.7 665.4L1142.0 668.3L1143.9 671.7L1146.1 674.4L1148.2 675.9L1150.3 675.0L1152.4 673.1L1154.5 671.3L1156.7 669.4L1159.5 667.8L1162.1 666.4L1163.8 665.8L1165.1 664.8L1166.6 662.1L1168.1 658.4L1169.6 654.1L1171.1 649.4L1172.6 644.7L1174.2 640.3L1175.7 636.6L1177.2 633.3L1178.7 630.2L1180.2 627.3L1181.7 624.2L1183.2 621.3L1184.7 618.4L1186.2 615.9L1187.7 613.7L1189.2 611.8L1190.7 610.3L1192.2 609.2L1193.7 608.7L1195.2 608.6L1196.7 609.1L1198.2 609.2L1199.7 607.9L1201.2 606.2L1202.7 604.9L1204.3 603.8L1205.8 602.9L1207.3 602.2L1208.8 601.7L1210.3 601.2L1211.8 600.6L1213.3 600.2L1215.0 600.3L1216.7 600.2L1218.0 598.9L1219.3 597.2L1220.5 595.8L1221.9 594.6L1224.0 593.7L1225.7 593.2" fill="none" stroke="#fdd835" stroke-width="1.45" stroke-linejoin="round" clip-path="url(#crsi)"/>
<g>
<circle cx="1225.6" cy="505.4" r="14" fill="#0d0d0f"/>
<circle cx="1225.6" cy="505.4" r="12.6" fill="none" stroke="#ab47bc" stroke-width="1.6"/>
<path d="M1229.1 498.8L1220 506.3H1225L1221.1 512.7L1230.9 505H1226.1Z" fill="#ab47bc"/>
<circle cx="1234.1" cy="496.8" r="4.7" fill="#0d0d0f"/>
<circle cx="1234.1" cy="496.8" r="3.1" fill="#f23645"/>
</g>
<path fill="#d9d9d9" d="M13.2 818.8H23.3V830.8H17.4V823.8H13.2ZM30.3 818.8H37.3L32.7 830.8H26.9Z"/><circle cx="26.9" cy="820.9" r="2.2" fill="#d9d9d9"/>
</svg>
<div id="txt">
<div class="t hd" style="left:12.22px;top:12.95px;font-size:14.7px;transform:scaleY(1.009);transform-origin:0 12.35px;">Ron2ee published on TradingView.com, May 22, 2025 07:10 UTC</div>
<div class="t lg" style="left:22.32px;top:46.95px;font-size:14.7px;transform:scaleY(1.058);transform-origin:0 12.35px;letter-spacing:-0.006px;">Bitcoin / TetherUS · 1D · BINANCE</div>
<div class="t lg" style="left:259.11px;top:46.95px;font-size:14.7px;transform:scaleY(1.058);transform-origin:0 12.35px;">O</div>
<div class="t lg" style="left:352.12px;top:46.95px;font-size:14.7px;transform:scaleY(1.058);transform-origin:0 12.35px;">H</div>
<div class="t lg" style="left:444.92px;top:46.95px;font-size:14.7px;transform:scaleY(1.058);transform-origin:0 12.35px;">L</div>
<div class="t lg" style="left:535.56px;top:46.95px;font-size:14.7px;transform:scaleY(1.058);transform-origin:0 12.35px;">C</div>
<div class="t lg gr" style="left:270.57px;top:46.95px;font-size:14.7px;transform:scaleY(1.058);transform-origin:0 12.35px;letter-spacing:-0.052px;">109,643.99</div>
<div class="t lg gr" style="left:363.57px;top:46.95px;font-size:14.7px;transform:scaleY(1.058);transform-origin:0 12.35px;letter-spacing:0.141px;">111,880.00</div>
<div class="t lg gr" style="left:452.97px;top:46.95px;font-size:14.7px;transform:scaleY(1.058);transform-origin:0 12.35px;letter-spacing:0.015px;">109,177.37</div>
<div class="t lg gr" style="left:545.27px;top:46.95px;font-size:14.7px;transform:scaleY(1.058);transform-origin:0 12.35px;letter-spacing:0.109px;">110,653.45</div>
<div class="t lg gr" style="left:628.01px;top:46.95px;font-size:14.7px;transform:scaleY(1.058);transform-origin:0 12.35px;letter-spacing:-0.116px;">+1,009.46 (+0.92%)</div>
<div class="t lg" style="left:22.32px;top:67.95px;font-size:14.7px;transform:scaleY(1.058);transform-origin:0 12.35px;letter-spacing:-0.058px;">EMA (21, close)</div>
<div class="t lg" style="left:134.77px;top:67.95px;font-size:14.7px;transform:scaleY(1.058);transform-origin:0 12.35px;letter-spacing:-0.074px;color:#2962ff">102,724.71</div>
<div class="t lg" style="left:22.12px;top:535.95px;font-size:14.7px;transform:scaleY(1.058);transform-origin:0 12.35px;letter-spacing:-0.026px;">RSI (14, close)</div>
<div class="t lg" style="left:127.67px;top:535.95px;font-size:14.7px;transform:scaleY(1.058);transform-origin:0 12.35px;letter-spacing:0.120px;color:#7e57c2">76.93</div>
<div class="t lg" style="left:173.66px;top:535.95px;font-size:14.7px;-webkit-text-stroke:0.45px currentColor;transform:scaleY(1.058);transform-origin:0 12.35px;letter-spacing:0.207px;color:#fdd835">71.97</div>
<div style="position:absolute;left:1318px;top:35px;width:96px;height:487px;overflow:hidden">
<div class="t ax" style="left:10.64px;top:-6.80px;font-size:15.2px;transform:scaleY(1.042);transform-origin:0 13.10px;letter-spacing:-0.007px;">140,000.00</div>
<div class="t ax" style="left:10.64px;top:66.20px;font-size:15.2px;transform:scaleY(1.042);transform-origin:0 13.10px;letter-spacing:-0.007px;">120,000.00</div>
<div class="t ax" style="left:11.09px;top:212.20px;font-size:15.2px;transform:scaleY(1.042);transform-origin:0 13.10px;letter-spacing:0.017px;">80,000.00</div>
<div class="t ax" style="left:10.94px;top:284.20px;font-size:15.2px;transform:scaleY(1.042);transform-origin:0 13.10px;letter-spacing:0.036px;">60,000.00</div>
<div class="t ax" style="left:11.40px;top:357.20px;font-size:15.2px;transform:scaleY(1.042);transform-origin:0 13.10px;letter-spacing:-0.021px;">40,000.00</div>
<div class="t ax" style="left:10.94px;top:430.20px;font-size:15.2px;transform:scaleY(1.042);transform-origin:0 13.10px;letter-spacing:0.036px;">20,000.00</div>
</div>
<div style="position:absolute;left:1318px;top:523px;width:96px;height:244px;overflow:hidden">
<div class="t ax" style="left:10.69px;top:40.20px;font-size:15.2px;transform:scaleY(1.014);transform-origin:0 13.10px;letter-spacing:0.030px;">80.00</div>
<div class="t ax" style="left:10.54px;top:98.20px;font-size:15.2px;transform:scaleY(1.014);transform-origin:0 13.10px;letter-spacing:0.068px;">60.00</div>
<div class="t ax" style="left:11.00px;top:156.20px;font-size:15.2px;transform:scaleY(1.014);transform-origin:0 13.10px;letter-spacing:-0.046px;">40.00</div>
<div class="t ax" style="left:10.54px;top:213.20px;font-size:15.2px;transform:scaleY(1.014);transform-origin:0 13.10px;letter-spacing:0.068px;">20.00</div>
</div>
<div class="pl" style="top:133px;width:93px;height:39px;background:#089981;border-radius:0 3px 3px 0;box-shadow:0 0 0 1px #131722"><div class="t " style="left:10.63px;top:2.16px;font-size:15.28px;-webkit-text-stroke:0.45px currentColor;transform:scaleY(0.980);transform-origin:0 13.14px;">110,653.45</div><div class="t " style="left:11.14px;top:20.26px;font-size:15.08px;transform:scaleY(0.993);transform-origin:0 13.04px;color:#d4efe9;-webkit-text-stroke:0.2px currentColor;">16:49:25</div></div>
<div class="pl" style="top:172px;width:93px;height:21px;background:#2962ff;border-radius:0 3px 3px 0;"><div class="t " style="left:11.17px;top:2.96px;font-size:14.69px;-webkit-text-stroke:0.45px currentColor;transform:scaleY(1.019);transform-origin:0 12.34px;">102,724.71</div></div>
<div class="pl" style="top:569px;width:54px;height:21px;background:#7e57c2;border-radius:0 3px 3px 0;"><div class="t " style="left:10.74px;top:3.25px;font-size:15.11px;transform:scaleY(1.020);transform-origin:0 13.05px;">76.93</div></div>
<div class="pl" style="top:590px;width:54px;height:21px;background:#fdd835;border-radius:0 3px 3px 0;"><div class="t " style="left:10.74px;top:3.21px;font-size:15.17px;transform:scaleY(1.016);transform-origin:0 13.09px;color:#131722">71.97</div></div>
<div class="t tm" style="left:73.97px;top:779.05px;font-size:14.5px;transform:scaleY(1.063);transform-origin:0 12.25px;letter-spacing:-0.098px;">Sep</div>
<div class="t tm" style="left:183.64px;top:779.05px;font-size:14.5px;transform:scaleY(1.063);transform-origin:0 12.25px;letter-spacing:0.287px;">Nov</div>
<div class="t tm yr" style="left:289.97px;top:779.05px;font-size:14.5px;-webkit-text-stroke:0.45px currentColor;transform:scaleY(1.063);transform-origin:0 12.25px;letter-spacing:1.149px;">2024</div>
<div class="t tm" style="left:402.14px;top:779.05px;font-size:14.5px;transform:scaleY(1.063);transform-origin:0 12.25px;letter-spacing:0.789px;">Mar</div>
<div class="t tm" style="left:511.79px;top:779.05px;font-size:14.5px;transform:scaleY(1.063);transform-origin:0 12.25px;letter-spacing:0.334px;">May</div>
<div class="t tm" style="left:627.06px;top:779.05px;font-size:14.5px;transform:scaleY(1.063);transform-origin:0 12.25px;letter-spacing:1.155px;">Jul</div>
<div class="t tm" style="left:736.57px;top:779.05px;font-size:14.5px;transform:scaleY(1.063);transform-origin:0 12.25px;letter-spacing:-0.098px;">Sep</div>
<div class="t tm" style="left:845.94px;top:779.05px;font-size:14.5px;transform:scaleY(1.063);transform-origin:0 12.25px;letter-spacing:0.287px;">Nov</div>
<div class="t tm yr" style="left:952.18px;top:779.05px;font-size:14.5px;-webkit-text-stroke:0.45px currentColor;transform:scaleY(1.063);transform-origin:0 12.25px;letter-spacing:1.197px;">2025</div>
<div class="t tm" style="left:1063.44px;top:779.05px;font-size:14.5px;transform:scaleY(1.063);transform-origin:0 12.25px;letter-spacing:0.789px;">Mar</div>
<div class="t tm" style="left:1172.59px;top:779.05px;font-size:14.5px;transform:scaleY(1.063);transform-origin:0 12.25px;letter-spacing:0.334px;">May</div>
<div class="t tm" style="left:1287.95px;top:779.05px;font-size:14.5px;transform:scaleY(1.063);transform-origin:0 12.25px;letter-spacing:1.155px;">Jul</div>
<div class="t " style="left:41.68px;top:816.81px;font-size:15.97px;transform:scaleY(0.920);transform-origin:0 13.48px;color:#d9d9d9;">TradingView</div>
</div>
</body></html>
